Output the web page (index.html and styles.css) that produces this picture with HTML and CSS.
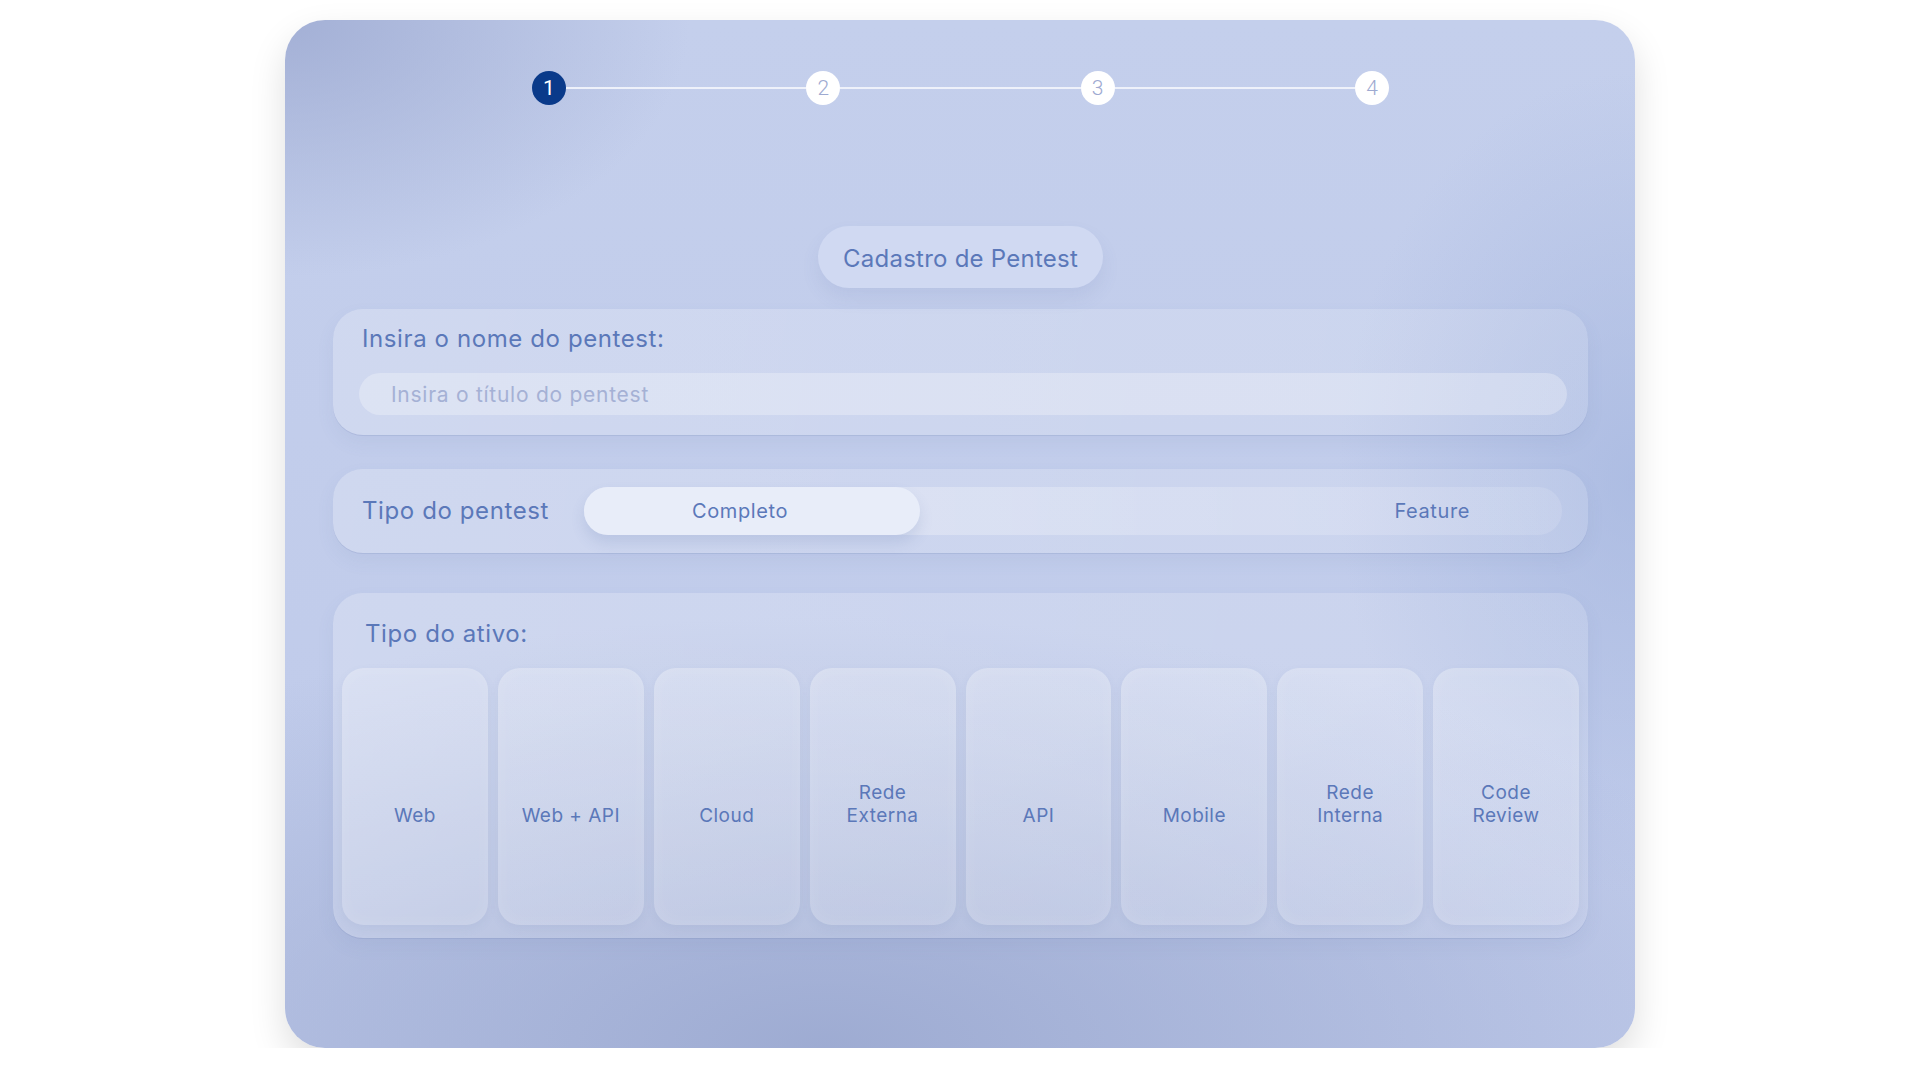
FILE: index.html
```html
<!DOCTYPE html>
<html lang="pt-BR">
<head>
    <meta charset="UTF-8">
    <meta name="viewport" content="width=device-width, initial-scale=1.0">
    <title>Cadastro de Pentest</title>
    <link rel="stylesheet" href="styles.css">
</head>
<body>
    <div class="wizard">
        <!-- etapas -->
        <div class="stepper">
            <span class="step active">1</span>
            <span class="step-line"></span>
            <span class="step">2</span>
            <span class="step-line"></span>
            <span class="step">3</span>
            <span class="step-line"></span>
            <span class="step">4</span>
        </div>

        <div class="title-wrap">
            <h1 class="title">Cadastro de Pentest</h1>
        </div>

        <!-- nome -->
        <section class="panel panel-name">
            <label class="panel-label" for="pentest-name">Insira o nome do pentest:</label>
            <input type="text" id="pentest-name" class="text-input" placeholder="Insira o título do pentest">
        </section>

        <!-- tipo do pentest -->
        <section class="panel panel-type">
            <span class="panel-label type-label">Tipo do pentest</span>
            <div class="toggle">
                <button class="toggle-option active">Completo</button>
                <button class="toggle-option">Feature</button>
            </div>
        </section>

        <!-- tipo do ativo -->
        <section class="panel panel-asset">
            <div class="panel-label asset-label">Tipo do ativo:</div>
            <div class="asset-grid">
                <button class="asset-card"><span>Web</span></button>
                <button class="asset-card"><span>Web + API</span></button>
                <button class="asset-card"><span>Cloud</span></button>
                <button class="asset-card"><span>Rede<br>Externa</span></button>
                <button class="asset-card"><span>API</span></button>
                <button class="asset-card"><span>Mobile</span></button>
                <button class="asset-card"><span>Rede<br>Interna</span></button>
                <button class="asset-card"><span>Code<br>Review</span></button>
            </div>
        </section>
    </div>
</body>
</html>
```

FILE: styles.css
```css
* {
    box-sizing: border-box;
}
body {
    margin: 0;
    padding: 0;
    background: #ffffff;
    font-family: "Inter", "Open Sans", sans-serif;
    color: #5b78b9;
}
.wizard {
    width: 1350px;
    margin: 20px auto 0;
    padding: 51px 47px 110px 48px;
    border-radius: 40px;
    background:
        radial-gradient(ellipse 30% 25% at 0% 0%, rgba(155, 168, 208, 0.8), rgba(155, 168, 208, 0)),
        radial-gradient(ellipse 75% 42% at 40% 100%, rgba(152, 166, 206, 0.85), rgba(152, 166, 206, 0)),
        radial-gradient(ellipse 22% 40% at 100% 45%, rgba(162, 180, 222, 0.65), rgba(162, 180, 222, 0)),
        linear-gradient(180deg, #c4cfec 0%, #bfcaea 100%);
    box-shadow: 0 16px 36px rgba(0, 0, 0, 0.13);
}

/* etapas */
.stepper {
    width: 857px;
    margin: 0 auto;
    display: flex;
    align-items: center;
}
.step {
    width: 34px;
    height: 34px;
    flex: none;
    border-radius: 50%;
    background: #ffffff;
    color: #9eaad1;
    font-family: "Roboto", sans-serif;
    font-size: 21px;
    font-weight: 300;
    display: flex;
    align-items: center;
    justify-content: center;
}
.step.active {
    background: #0a3a8a;
    color: #ffffff;
    font-weight: 400;
}
.step-line {
    flex: 1;
    height: 2px;
    background: #eef1fa;
}

/* titulo */
.title-wrap {
    display: flex;
    justify-content: center;
    margin-top: 121px;
}
.title {
    margin: 0;
    height: 62px;
    padding: 3px 25px 0;
    border-radius: 31px;
    background: #d0d9f2;
    box-shadow: 0 10px 18px rgba(90, 110, 170, 0.1);
    font-size: 24px;
    font-weight: 400;
    line-height: 59px;
    letter-spacing: 0.01em;
}

/* paineis */
.panel {
    border-radius: 30px;
    background: linear-gradient(100deg, rgba(255, 255, 255, 0.22), rgba(255, 255, 255, 0.14));
    box-shadow: 0 1px 0 rgba(110, 130, 180, 0.18), 0 8px 18px rgba(90, 110, 170, 0.08);
}
.panel-label {
    font-size: 24px;
    line-height: 30px;
    letter-spacing: 0.025em;
}
.panel-name {
    margin-top: 21px;
    padding: 15px 21px 20px 26px;
}
.panel-name .panel-label {
    display: block;
    margin: 0 0 19px 3px;
}
.text-input {
    display: block;
    width: 100%;
    height: 42px;
    padding: 0 32px;
    border: none;
    border-radius: 21px;
    background: rgba(255, 255, 255, 0.28);
    font-family: inherit;
    font-size: 21px;
    letter-spacing: 0.035em;
    color: #5b78b9;
    outline: none;
}
.text-input::placeholder {
    color: #a5b1d5;
}

.panel-type {
    margin-top: 34px;
    height: 84px;
    padding: 0 26px 0 29px;
    display: flex;
    align-items: center;
}
.type-label {
    width: 222px;
    flex: none;
}
.toggle {
    flex: 1;
    height: 48px;
    border-radius: 24px;
    display: flex;
    justify-content: space-between;
    background: linear-gradient(90deg, rgba(255, 255, 255, 0.36), rgba(255, 255, 255, 0.12));
}
.toggle-option {
    height: 48px;
    padding: 0 92px 0 0;
    border: none;
    border-radius: 24px;
    background: transparent;
    font-family: inherit;
    font-size: 20px;
    letter-spacing: 0.03em;
    color: #5b78b9;
    cursor: pointer;
}
.toggle-option.active {
    width: 336px;
    padding: 0 24px 0 0;
    background: #e8edf9;
    box-shadow: 0 8px 14px rgba(90, 110, 170, 0.16);
}

.panel-asset {
    margin-top: 40px;
    padding: 26px 9px 13px;
}
.asset-label {
    padding-left: 23px;
    margin-bottom: 19px;
}
.asset-grid {
    display: grid;
    grid-template-columns: repeat(8, 1fr);
    gap: 10px;
    height: 257px;
}
.asset-card {
    display: flex;
    flex-direction: column;
    justify-content: flex-end;
    align-items: center;
    padding: 0 0 98px;
    border: none;
    border-radius: 22px;
    background: linear-gradient(165deg, rgba(255, 255, 255, 0.24), rgba(255, 255, 255, 0.12));
    box-shadow: inset 0 0 18px rgba(255, 255, 255, 0.12), 0 4px 10px rgba(90, 110, 170, 0.08);
    font-family: inherit;
    font-size: 19px;
    line-height: 23px;
    letter-spacing: 0.025em;
    color: #5b78b9;
    cursor: pointer;
}
```
